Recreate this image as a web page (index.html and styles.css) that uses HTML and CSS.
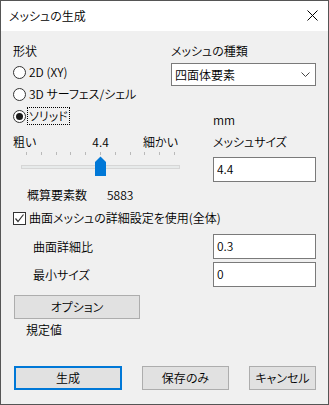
FILE: index.html
```html
<!DOCTYPE html>
<html>
<head>
<meta charset="utf-8" />
<title>メッシュの生成</title>
<link rel="stylesheet" href="styles.css">
</head>
<body>
<div class="win">
	<div class="titlebar">
		<span class="title">メッシュの生成</span>
		<svg class="close" width="11" height="11" viewBox="0 0 11 11"><path d="M0.5 0.5L10.5 10.5M10.5 0.5L0.5 10.5" stroke="#000" stroke-width="1" fill="none"/></svg>
	</div>
	<div class="content">
		<!-- 形状 / メッシュの種類 -->
		<div class="sec1">
			<div class="colL">
				<p class="lbl">形状</p>
				<div class="radio"><i></i><span>2D (XY)</span></div>
				<div class="radio"><i></i><span>3D サーフェス/シェル</span></div>
				<div class="radio on"><i></i><span class="focus">ソリッド</span></div>
			</div>
			<div class="colR">
				<p class="lbl">メッシュの種類</p>
				<div class="select">
					<span>四面体要素</span>
					<svg width="9" height="5" viewBox="0 0 9 5"><path d="M0.5 0.5L4.5 4.5L8.5 0.5" stroke="#444" stroke-width="1" fill="none"/></svg>
				</div>
				<p class="unit">mm</p>
			</div>
		</div>
		<!-- スライダー / メッシュサイズ -->
		<div class="sec2">
			<div class="sliderBox">
				<div class="scale">
					<span>粗い</span>
					<span class="val">4.4</span>
					<span class="fine">細かい</span>
				</div>
				<svg class="slider" width="168" height="26" viewBox="0 0 168 26">
					<g stroke="#b9b9b9" stroke-width="1">
						<line x1="13.5" y1="1" x2="13.5" y2="4"/>
						<line x1="28.5" y1="1" x2="28.5" y2="4"/>
						<line x1="43.5" y1="1" x2="43.5" y2="4"/>
						<line x1="57.5" y1="1" x2="57.5" y2="4"/>
						<line x1="72.5" y1="1" x2="72.5" y2="4"/>
						<line x1="87.5" y1="1" x2="87.5" y2="4"/>
						<line x1="102.5" y1="1" x2="102.5" y2="4"/>
						<line x1="117.5" y1="1" x2="117.5" y2="4"/>
						<line x1="131.5" y1="1" x2="131.5" y2="4"/>
						<line x1="146.5" y1="1" x2="146.5" y2="4"/>
						<line x1="161.5" y1="1" x2="161.5" y2="4"/>
					</g>
					<rect x="8.5" y="14.5" width="158" height="3" fill="#e7eaea" stroke="#d6d6d6"/>
					<path d="M82 11L87.5 5.5L93 11V25H82Z" fill="#0078d7"/>
				</svg>
			</div>
			<div class="sizeBox">
				<p class="lbl">メッシュサイズ</p>
				<input class="txt" type="text" value="4.4">
			</div>
		</div>
		<div class="count"><span>概算要素数</span><span class="num">5883</span></div>
		<div class="check">
			<i><svg width="11" height="11" viewBox="0 0 11 11"><path d="M1.5 5.5L4 8.5L9.5 1.5" stroke="#333" stroke-width="1.2" fill="none"/></svg></i>
			<span>曲面メッシュの詳細設定を使用(全体)</span>
		</div>
		<div class="field first"><span>曲面詳細比</span><input class="txt" type="text" value="0.3"></div>
		<div class="field"><span>最小サイズ</span><input class="txt" type="text" value="0"></div>
		<div class="btn opt">オプション</div>
		<p class="def">規定値</p>
		<div class="foot">
			<div class="btn ok">生成</div>
			<div class="btn save">保存のみ</div>
			<div class="btn cancel">キャンセル</div>
		</div>
	</div>
</div>
</body>
</html>
```

FILE: styles.css
```css
body,p{margin:0;padding:0;}
body{font-family:"Noto Sans CJK JP","Noto Sans",sans-serif;font-size:12px;font-weight:350;line-height:16px;color:#000;font-feature-settings:"palt";}
.win{width:329px;height:405px;box-sizing:border-box;border:1px solid #555;display:flex;flex-direction:column;background:#f0f0f0;}
.titlebar{height:30px;background:#fff;display:flex;align-items:center;padding:0 10px 0 8px;}
.title{flex:1;}
.close{display:block;margin-top:-2px;}
.content{flex:1;padding:0 12px 0 12px;display:flex;flex-direction:column;}

/* 上段 */
.sec1{display:flex;padding-top:12px;}
.colL{width:158px;}
.colR{width:145px;}
.radio{display:flex;align-items:center;height:22px;}
.colL .lbl{margin-bottom:2px;}
.radio i{width:13px;height:13px;box-sizing:border-box;border:1px solid #333;border-radius:50%;background:#fff;margin-right:3px;display:flex;align-items:center;justify-content:center;}
.radio.on i:after{content:"";width:7px;height:7px;border-radius:50%;background:#1a1a1a;}
.focus{outline:1px dotted #000;outline-offset:0;padding:0 1px;margin-left:-1px;}
.select{margin-top:4px;height:23px;box-sizing:border-box;border:1px solid #7a7a7a;background:#fff;display:flex;align-items:center;padding:0 5px 0 3px;}
.select span{flex:1;}
.select svg{display:block;}
.unit{margin:26px 0 0 42px;}

/* スライダー */
.sec2{display:flex;margin-top:6px;}
.sliderBox{width:168px;}
.scale{display:flex;width:165px;}
.scale .val{margin-left:56px;}
.scale .fine{margin-left:auto;}
.slider{display:block;margin-top:1px;}
.sizeBox{margin-left:auto;width:103px;}
.txt{display:block;width:103px;height:25px;box-sizing:border-box;border:1px solid #7a7a7a;background:#fff;font-family:inherit;font-size:12px;font-weight:inherit;padding:0 3px 2px;margin:0;color:#000;outline:none;}
.sizeBox .txt{margin-top:7px;}

.count{display:flex;margin-top:5px;padding-left:14px;}
.count .num{margin-left:20px;}
.check{display:flex;align-items:center;margin-top:7px;}
.check i{width:13px;height:13px;box-sizing:border-box;border:1px solid #333;background:#fff;margin-right:3px;display:flex;align-items:center;justify-content:center;}
.check svg{display:block;}
.field{display:flex;align-items:center;margin-top:3px;padding-left:20px;}
.field.first{margin-top:8px;}
.field .txt{margin-left:auto;}

.btn{height:24px;box-sizing:border-box;border:1px solid #adadad;background:#e1e1e1;display:flex;align-items:center;justify-content:center;}
.opt{width:126px;margin:8px 0 0 1px;}
.def{margin:3px 0 0 13px;}
.foot{display:flex;margin-top:28px;padding-left:1px;}
.ok{width:108px;border:2px solid #0078d7;}
.save{width:87px;margin-left:20px;}
.cancel{width:67px;margin-left:20px;}
```
